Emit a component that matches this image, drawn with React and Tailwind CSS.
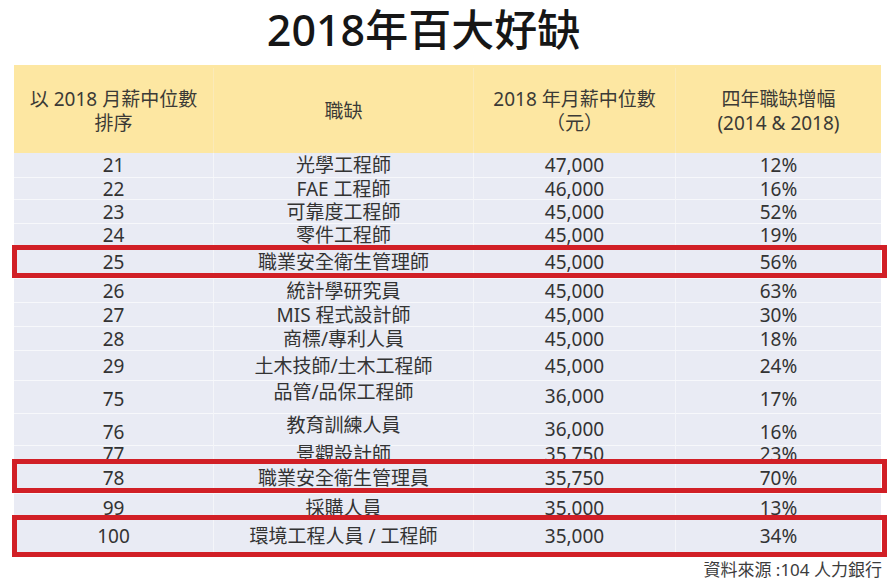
import React from "react";

const rows = [
  { r: "21", j: "光學工程師", s: "47,000", p: "12%", h: "h-[24px]" },
  { r: "22", j: "FAE 工程師", s: "46,000", p: "16%", h: "h-[22px]" },
  { r: "23", j: "可靠度工程師", s: "45,000", p: "52%", h: "h-[24px]" },
  { r: "24", j: "零件工程師", s: "45,000", p: "19%", h: "h-[22px]" },
  { r: "25", j: "職業安全衛生管理師", s: "45,000", p: "56%", h: "h-[33px]" },
  { r: "26", j: "統計學研究員", s: "45,000", p: "63%", h: "h-[24px]" },
  { r: "27", j: "MIS 程式設計師", s: "45,000", p: "30%", h: "h-[24px]" },
  { r: "28", j: "商標/專利人員", s: "45,000", p: "18%", h: "h-[24px]" },
  { r: "29", j: "土木技師/土木工程師", s: "45,000", p: "24%", h: "h-[30px]" },
  { r: "75", j: "品管/品保工程師", s: "36,000", p: "17%", h: "h-[33px]", jc: "pb-[14px]", sc: "pb-[7px]" },
  { r: "76", j: "教育訓練人員", s: "36,000", p: "16%", h: "h-[32px]", jc: "pb-[14px]", sc: "pb-[7px]" },
  { r: "77", j: "景觀設計師", s: "35,750", p: "23%", h: "h-[17px] leading-[16px]" },
  { r: "78", j: "職業安全衛生管理員", s: "35,750", p: "70%", h: "h-[31px]" },
  { r: "99", j: "採購人員", s: "35,000", p: "13%", h: "h-[23px] leading-[18px]", rc: "pt-[5px]" },
  { r: "100", j: "環境工程人員 / 工程師", s: "35,000", p: "34%", h: "h-[39px]" },
];

function Row({ d, first }) {
  const base = "flex items-center justify-center whitespace-nowrap " + (d.rc || "");
  return (
    <div
      className={
        "grid grid-cols-[199px_260px_202px_206px] bg-[#e9ebf4] " +
        d.h +
        (first ? "" : " border-t border-[#f7f8fb]")
      }
    >
      <div className={base}>{d.r}</div>
      <div className={base + " border-l border-[#f4f5f9] " + (d.jc || "")}>{d.j}</div>
      <div className={base + " border-l border-[#f4f5f9] " + (d.sc || "")}>{d.s}</div>
      <div className={base + " border-l border-[#f4f5f9]"}>{d.p}</div>
    </div>
  );
}

export default function App() {
  return (
    <div className="relative w-[890px] h-[585px] overflow-hidden bg-white text-[#333] font-['Noto_Sans','Noto_Sans_CJK_TC',sans-serif]">
      <div className="h-[65px] flex items-center justify-center pr-[43px] pb-[6px]">
        <h1 className="text-[43px] leading-[44px] font-medium text-[#161616]">
          2018年百大好缺
        </h1>
      </div>

      <div className="ml-[14px] w-[867px] text-[19px] leading-[22px]">
        <div className="grid grid-cols-[199px_260px_202px_206px] h-[88px] bg-[#fde7a2] text-[#3b3a36] pt-[3px]">
          <div className="flex flex-col items-center justify-center leading-[24px] whitespace-nowrap">
            <span>以 2018 月薪中位數</span>
            <span>排序</span>
          </div>
          <div className="flex flex-col items-center justify-center leading-[24px] border-l border-[#fbeab8]">
            <span>職缺</span>
          </div>
          <div className="flex flex-col items-center justify-center leading-[24px] border-l border-[#fbeab8] whitespace-nowrap">
            <span>2018 年月薪中位數</span>
            <span>（元）</span>
          </div>
          <div className="flex flex-col items-center justify-center leading-[24px] border-l border-[#fbeab8] whitespace-nowrap">
            <span>四年職缺增幅</span>
            <span>(2014 &amp; 2018)</span>
          </div>
        </div>
        {rows.map((d, i) => (
          <Row key={d.r} d={d} first={i === 0} />
        ))}
      </div>

      <div className="flex justify-end pr-[8px] mt-[4px] text-[17px] leading-[22px] text-[#3c3c3c]">
        資料來源 :104 人力銀行
      </div>

      <div className="absolute left-[12px] top-[245px] w-[875px] h-[33px] border-[5px] border-[#d11f26]" />
      <div className="absolute left-[12px] top-[459px] w-[875px] h-[34px] border-[5px] border-[#d11f26]" />
      <div className="absolute left-[12px] top-[515px] w-[875px] h-[42px] border-[5px] border-[#d11f26]" />
    </div>
  );
}
